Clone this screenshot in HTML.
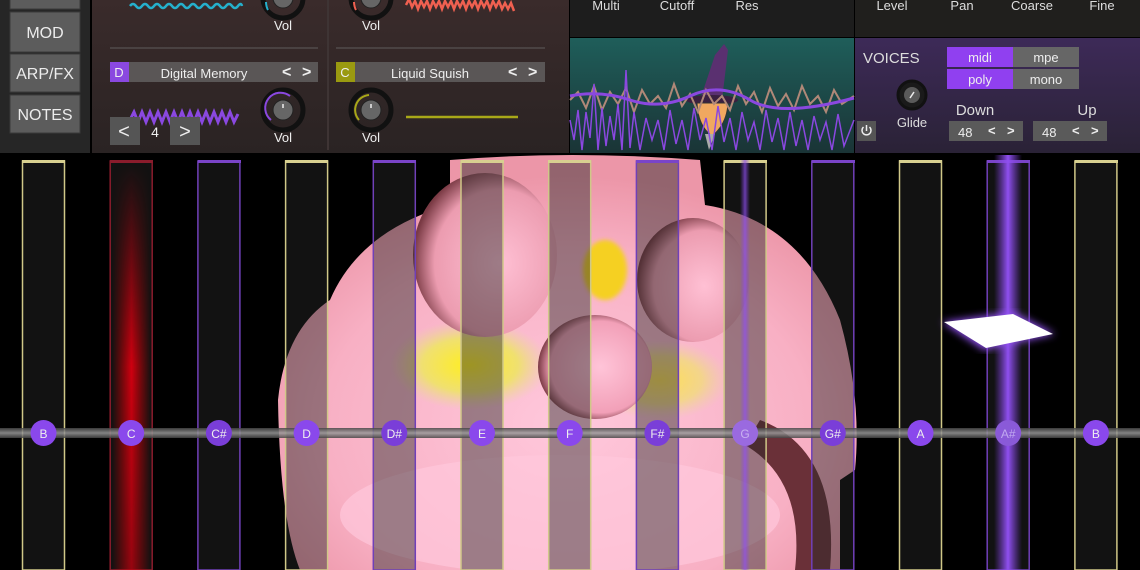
<!DOCTYPE html>
<html><head><meta charset="utf-8"><style>
html,body{margin:0;padding:0;background:#000;width:1140px;height:570px;overflow:hidden}
svg{display:block}
text{font-family:"Liberation Sans",sans-serif}
</style></head><body>
<svg width="1140" height="570" viewBox="0 0 1140 570" xmlns="http://www.w3.org/2000/svg">
<defs>
<linearGradient id="mainbg" x1="0" y1="0" x2="0" y2="1"><stop offset="0" stop-color="#3a2b2b"/><stop offset="1" stop-color="#2a2323"/></linearGradient>
<linearGradient id="scope" x1="0" y1="0" x2="0" y2="1"><stop offset="0" stop-color="#1f5e5a"/><stop offset="1" stop-color="#1a3436"/></linearGradient>
<linearGradient id="voice" x1="0" y1="0" x2="0" y2="1"><stop offset="0" stop-color="#3d2a58"/><stop offset="1" stop-color="#2a2236"/></linearGradient>
<linearGradient id="cred" x1="0" y1="0" x2="1" y2="0"><stop offset="0" stop-color="#c00" stop-opacity="0"/><stop offset="0.5" stop-color="#d00010"/><stop offset="1" stop-color="#c00" stop-opacity="0"/></linearGradient>
<linearGradient id="credv" x1="0" y1="0" x2="0" y2="1"><stop offset="0" stop-color="#fff" stop-opacity="0"/><stop offset="0.5" stop-color="#fff"/><stop offset="1" stop-color="#fff" stop-opacity="0.7"/></linearGradient>
<mask id="cm"><rect x="110" y="163" width="43" height="407" fill="url(#credv)"/></mask>
<linearGradient id="pbeam" x1="0" y1="0" x2="1" y2="0"><stop offset="0" stop-color="#8040e0" stop-opacity="0"/><stop offset="0.5" stop-color="#9050f0"/><stop offset="1" stop-color="#8040e0" stop-opacity="0"/></linearGradient>
<linearGradient id="gline" x1="0" y1="0" x2="0" y2="1"><stop offset="0" stop-color="#444"/><stop offset="0.5" stop-color="#9a9a9a"/><stop offset="1" stop-color="#444"/></linearGradient>
<radialGradient id="pink" cx="0.5" cy="0.65" r="0.6"><stop offset="0" stop-color="#ffc8dc"/><stop offset="0.7" stop-color="#f8b0c4"/><stop offset="1" stop-color="#ec96a8"/></radialGradient>
<radialGradient id="lobe" cx="0.6" cy="0.55" r="0.6"><stop offset="0" stop-color="#ffc0d4"/><stop offset="0.75" stop-color="#ec9cb0"/><stop offset="1" stop-color="#7a3a44"/></radialGradient>
<radialGradient id="ball" cx="0.55" cy="0.5" r="0.55"><stop offset="0" stop-color="#ffc4d8"/><stop offset="0.8" stop-color="#f2a0b8"/><stop offset="1" stop-color="#7a3a44"/></radialGradient>
<radialGradient id="yel" cx="0.5" cy="0.5" r="0.5"><stop offset="0" stop-color="#ffee20"/><stop offset="0.6" stop-color="#f0e070"/><stop offset="1" stop-color="#e8d8a0" stop-opacity="0"/></radialGradient>
<filter id="blur"><feGaussianBlur stdDeviation="4"/></filter>
<filter id="sblur"><feGaussianBlur stdDeviation="2"/></filter>
</defs>

<!-- ===== top panels ===== -->
<rect x="0" y="0" width="90" height="153" fill="#262626"/>
<rect x="10" y="-10" width="70" height="19" fill="#5c5c5c" stroke="#3a3a3a"/>
<rect x="10" y="12" width="70" height="40" fill="#5c5c5c" stroke="#3a3a3a"/>
<rect x="10" y="54" width="70" height="38" fill="#5c5c5c" stroke="#3a3a3a"/>
<rect x="10" y="95" width="70" height="38" fill="#5c5c5c" stroke="#3a3a3a"/>
<g fill="#ececec" font-size="16" text-anchor="middle">
<text x="45" y="38">MOD</text><text x="45" y="79">ARP/FX</text><text x="45" y="120">NOTES</text></g>

<rect x="92" y="0" width="477" height="153" fill="url(#mainbg)"/>
<line x1="328" y1="0" x2="328" y2="150" stroke="#3e3434" stroke-width="2"/>
<line x1="110" y1="48" x2="318" y2="48" stroke="#4a4242" stroke-width="2"/>
<line x1="336" y1="48" x2="545" y2="48" stroke="#4a4242" stroke-width="2"/>

<!-- waves -->
<path d="M130,6 q3,-4 6,0 t6,0 t6,0 t6,0 t6,0 t6,0 t6,0 t6,0 t6,0 t6,0 t6,0 t6,0 t6,0 t6,0 t6,0 t6,0 t6,0 t6,0 t4,0" fill="none" stroke="#25b0cc" stroke-width="2.5"/>
<path d="M406,5 l3,-6 3,8 3,-6 3,8 3,-8 3,6 3,-6 3,8 3,-8 3,6 3,-6 3,8 3,-8 3,6 3,-6 3,8 3,-8 3,6 3,-6 3,8 3,-8 3,6 3,-6 3,8 3,-8 3,6 3,-6 3,8 3,-8 3,6 3,-6 3,8 3,-6 3,6 3,-6 3,8" fill="none" stroke="#f06050" stroke-width="2.5"/>
<path d="M130,120 l4,-8 4,10 4,-10 4,10 4,-10 4,10 4,-10 4,10 4,-10 4,10 4,-10 4,10 4,-10 4,10 4,-10 4,10 4,-10 4,10 4,-10 4,10 4,-10 4,10 4,-10 4,10 4,-10 4,10 4,-8" fill="none" stroke="#8a48e0" stroke-width="3"/>
<line x1="406" y1="117" x2="518" y2="117" stroke="#a8a818" stroke-width="2.5"/>

<!-- knobs -->
<g>
<circle cx="283" cy="-2" r="20" fill="none" stroke="#111" stroke-width="5"/><circle cx="283" cy="-2" r="10" fill="#666" stroke="#222"/>
<path d="M268,10 A18,18 0 0 1 266,2" stroke="#25b0cc" stroke-width="2" fill="none"/>
<circle cx="371" cy="-2" r="20" fill="none" stroke="#111" stroke-width="5"/><circle cx="371" cy="-2" r="10" fill="#666" stroke="#222"/>
<path d="M356,10 A18,18 0 0 1 354,2" stroke="#f06050" stroke-width="2" fill="none"/>
<circle cx="283" cy="110" r="20" fill="none" stroke="#111" stroke-width="5"/><circle cx="283" cy="110" r="10" fill="#666" stroke="#222"/>
<line x1="283" y1="104" x2="283" y2="108" stroke="#eee" stroke-width="1.5"/>
<path d="M271,120 A15,15 0 0 1 290,96" stroke="#8a48e0" stroke-width="2" fill="none"/>
<circle cx="371" cy="110" r="20" fill="none" stroke="#111" stroke-width="5"/><circle cx="371" cy="110" r="10" fill="#666" stroke="#222"/>
<line x1="371" y1="104" x2="371" y2="108" stroke="#eee" stroke-width="1.5"/>
<path d="M359,120 A15,15 0 0 1 369,95" stroke="#a8a818" stroke-width="2" fill="none"/>
</g>
<g fill="#eee" font-size="13" text-anchor="middle">
<text x="283" y="30">Vol</text><text x="371" y="30">Vol</text>
<text x="283" y="142">Vol</text><text x="371" y="142">Vol</text></g>

<!-- osc headers -->
<rect x="110" y="62" width="208" height="20" fill="#5a5656"/>
<rect x="110" y="62" width="19" height="20" fill="#8a48e0"/>
<rect x="336" y="62" width="209" height="20" fill="#5a5656"/>
<rect x="336" y="62" width="19" height="20" fill="#9a9a10"/>
<g fill="#eee" font-size="13">
<text x="119" y="77" text-anchor="middle">D</text>
<text x="204" y="78" text-anchor="middle">Digital Memory</text>
<text x="345" y="77" text-anchor="middle">C</text>
<text x="430" y="78" text-anchor="middle">Liquid Squish</text>
<text x="282" y="77" font-size="16" font-weight="bold">&lt;</text><text x="302" y="77" font-size="16" font-weight="bold">&gt;</text>
<text x="508" y="77" font-size="16" font-weight="bold">&lt;</text><text x="528" y="77" font-size="16" font-weight="bold">&gt;</text>
</g>
<rect x="110" y="117" width="30" height="28" fill="#555"/>
<rect x="170" y="117" width="30" height="28" fill="#555"/>
<g fill="#eee" text-anchor="middle"><text x="124" y="138" font-size="20">&lt;</text><text x="155" y="137" font-size="14">4</text><text x="185" y="138" font-size="20">&gt;</text></g>

<!-- filter area -->
<rect x="570" y="0" width="285" height="37" fill="#1d1d1d"/>
<rect x="855" y="0" width="285" height="37" fill="#201f1d"/>
<rect x="854" y="0" width="1" height="153" fill="#000"/>
<g fill="#ddd" font-size="13" text-anchor="middle">
<text x="606" y="10">Multi</text><text x="677" y="10">Cutoff</text><text x="747" y="10">Res</text>
<text x="892" y="10">Level</text><text x="962" y="10">Pan</text><text x="1032" y="10">Coarse</text><text x="1102" y="10">Fine</text></g>

<rect x="570" y="38" width="284" height="115" fill="url(#scope)"/>
<!-- wizard -->
<path d="M700,100 L715,55 L724,44 L728,50 L722,100 Z" fill="#5a3070"/>
<ellipse cx="712" cy="100" rx="26" ry="5" fill="#3a2040"/>
<path d="M697,103 Q698,126 712,136 Q727,124 728,103 Z" fill="#f0a860" stroke="#333"/>
<path d="M705,134 L709,150 L715,134 Z" fill="#aaa"/>
<!-- scope waves -->
<path d="M570,100 L578,92 586,108 594,86 602,110 610,92 618,104 626,88 634,112 642,90 650,104 658,96 666,108 674,84 682,106 690,94 698,112 706,90 714,104 722,96 730,110 738,86 746,104 754,92 762,112 770,88 778,106 786,94 794,110 802,86 810,104 818,96 826,112 834,90 842,104 854,96" fill="none" stroke="#b08878" stroke-width="2"/>
<path d="M570,96 Q600,90 630,100 T690,96 T750,100 T854,98" fill="none" stroke="#8a48e0" stroke-width="3"/>
<path d="M570,120 L574,140 578,110 582,150 586,112 590,138 594,84 598,150 602,108 606,146 610,116 614,140 618,104 622,150 626,70 630,148 634,112 640,150 646,118 652,140 658,120 664,150 670,110 676,144 682,120 688,150 694,108 700,140 706,118 712,150 718,106 724,142 730,118 736,150 742,112 748,140 754,122 760,150 766,110 772,142 778,118 784,150 790,112 796,146 802,120 808,150 814,116 820,140 826,122 832,150 838,114 844,146 854,120" fill="none" stroke="#8a48e0" stroke-width="1.5"/>

<!-- voices -->
<rect x="855" y="38" width="285" height="115" fill="url(#voice)"/>
<text x="863" y="63" fill="#ddd" font-size="15">VOICES</text>
<rect x="947" y="47" width="66" height="20" fill="#9040f0"/><rect x="1013" y="47" width="66" height="20" fill="#666"/>
<rect x="947" y="69" width="66" height="20" fill="#9040f0"/><rect x="1013" y="69" width="66" height="20" fill="#666"/>
<g fill="#eee" font-size="13" text-anchor="middle">
<text x="980" y="62">midi</text><text x="1046" y="62">mpe</text>
<text x="980" y="84">poly</text><text x="1046" y="84">mono</text></g>
<circle cx="912" cy="95" r="14" fill="#1a1a1a" stroke="#111" stroke-width="3"/>
<circle cx="912" cy="95" r="8" fill="#5a5a5a"/>
<line x1="910" y1="98" x2="914" y2="92" stroke="#eee" stroke-width="1.5"/>
<text x="912" y="127" fill="#ddd" font-size="13" text-anchor="middle">Glide</text>
<rect x="857" y="121" width="19" height="20" fill="#555"/>
<path d="M863.5,127 A4.5,4.5 0 1 0 869.5,127 M866.5,125 L866.5,131" stroke="#eee" stroke-width="1.5" fill="none"/>
<text x="975" y="115" fill="#ddd" font-size="15" text-anchor="middle">Down</text>
<text x="1087" y="115" fill="#ddd" font-size="15" text-anchor="middle">Up</text>
<rect x="949" y="121" width="74" height="20" fill="#5a5a5a"/><rect x="1033" y="121" width="74" height="20" fill="#5a5a5a"/>
<g fill="#eee" font-size="13"><text x="958" y="137">48</text><text x="988" y="135" font-weight="bold">&lt;</text><text x="1007" y="135" font-weight="bold">&gt;</text>
<text x="1042" y="137">48</text><text x="1072" y="135" font-weight="bold">&lt;</text><text x="1091" y="135" font-weight="bold">&gt;</text></g>

<!-- ===== blob ===== -->
<g>
<path d="M278,400 Q285,330 330,300 Q360,230 450,205 L450,160 Q570,150 700,160 L705,205 Q800,220 840,320 Q862,400 855,470 L840,480 L840,570 L300,570 Q280,520 278,400 Z" fill="url(#pink)"/>
<ellipse cx="470" cy="365" rx="80" ry="45" fill="url(#yel)"/>
<ellipse cx="660" cy="380" rx="70" ry="40" fill="url(#yel)" opacity="0.7"/>
<ellipse cx="605" cy="270" rx="22" ry="30" fill="#f5d020" filter="url(#sblur)"/>
<ellipse cx="485" cy="255" rx="72" ry="82" fill="url(#lobe)"/>
<ellipse cx="693" cy="280" rx="56" ry="62" fill="url(#lobe)"/>
<path d="M760,420 Q840,450 830,570 L795,570 Q805,480 745,445 Z" fill="#6a3038"/>
<ellipse cx="595" cy="367" rx="57" ry="52" fill="url(#ball)"/>
<ellipse cx="560" cy="515" rx="220" ry="60" fill="#ffc8dc" opacity="0.7"/>
</g>

<!-- ===== keys ===== -->
<g>
<g fill="rgba(40,40,40,0.45)" stroke-width="1.5">
<rect x="22.5" y="161" width="42" height="409" stroke="#d0c888" fill="#121212"/>
<rect x="110.2" y="161" width="42" height="409" stroke="#8a1c2c" fill="#121212"/>
<rect x="197.9" y="161" width="42" height="409" stroke="#7040b8" fill="#121212"/>
<rect x="285.6" y="161" width="42" height="409" stroke="#d0c888"/>
<rect x="373.3" y="161" width="42" height="409" stroke="#7040b8"/>
<rect x="461" y="161" width="42" height="409" stroke="#d0c888"/>
<rect x="548.7" y="161" width="42" height="409" stroke="#d0c888"/>
<rect x="636.4" y="161" width="42" height="409" stroke="#7040b8"/>
<rect x="724.1" y="161" width="42" height="409" stroke="#d0c888"/>
<rect x="811.8" y="161" width="42" height="409" stroke="#7040b8"/>
<rect x="899.5" y="161" width="42" height="409" stroke="#d0c888" fill="#121212"/>
<rect x="987.2" y="161" width="42" height="409" stroke="#7040b8" fill="#121212"/>
<rect x="1074.9" y="161" width="42" height="409" stroke="#d0c888" fill="#121212"/>
</g>
<g>
<rect x="22" y="160" width="43" height="3" fill="#d8d090"/>
<rect x="110" y="160" width="43" height="3" fill="#8a1c2c"/>
<rect x="198" y="160" width="43" height="3" fill="#7a44c8"/>
<rect x="285" y="160" width="43" height="3" fill="#d8d090"/>
<rect x="373" y="160" width="43" height="3" fill="#7a44c8"/>
<rect x="461" y="160" width="43" height="3" fill="#d8d090"/>
<rect x="548" y="160" width="43" height="3" fill="#d8d090"/>
<rect x="636" y="160" width="43" height="3" fill="#7a44c8"/>
<rect x="724" y="160" width="43" height="3" fill="#d8d090"/>
<rect x="812" y="160" width="43" height="3" fill="#7a44c8"/>
<rect x="899" y="160" width="43" height="3" fill="#d8d090"/>
<rect x="987" y="160" width="43" height="3" fill="#7a44c8"/>
<rect x="1075" y="160" width="43" height="3" fill="#d8d090"/>
</g>
<rect x="112" y="163" width="39" height="407" fill="url(#cred)" mask="url(#cm)"/>
<rect x="740" y="160" width="10" height="410" fill="url(#pbeam)" opacity="0.7"/>
<rect x="994" y="155" width="28" height="415" fill="url(#pbeam)"/>
<path d="M942,322 L1013,312 L1055,334 L984,350 Z" fill="#9050f0" filter="url(#blur)"/>
<path d="M944,322 L1013,314 L1053,334 L986,348 Z" fill="#fff"/>

<rect x="0" y="428" width="1140" height="10" fill="url(#gline)" opacity="0.85"/>
<g fill="#8a48ec">
<circle cx="43.5" cy="433" r="13"/><circle cx="131.2" cy="433" r="13"/><circle cx="218.9" cy="433" r="13" fill="#7a3ed8"/>
<circle cx="306.6" cy="433" r="13"/><circle cx="394.3" cy="433" r="13" fill="#7a3ed8"/><circle cx="482" cy="433" r="13"/>
<circle cx="569.7" cy="433" r="13"/><circle cx="657.4" cy="433" r="13" fill="#7a3ed8"/><circle cx="745.1" cy="433" r="13" fill="#9a6ae0"/>
<circle cx="832.8" cy="433" r="13" fill="#7a3ed8"/><circle cx="920.5" cy="433" r="13"/><circle cx="1008.2" cy="433" r="13" fill="#8a5ad8"/>
<circle cx="1095.9" cy="433" r="13"/></g>
<g fill="#eee" font-size="12" text-anchor="middle">
<text x="43.5" y="438">B</text><text x="131.2" y="438">C</text><text x="218.9" y="438">C#</text>
<text x="306.6" y="438">D</text><text x="394.3" y="438">D#</text><text x="482" y="438">E</text>
<text x="569.7" y="438">F</text><text x="657.4" y="438">F#</text><text x="745.1" y="438" fill="#c8b0f0">G</text>
<text x="832.8" y="438">G#</text><text x="920.5" y="438">A</text><text x="1008.2" y="438" fill="#c0a8f0">A#</text>
<text x="1095.9" y="438">B</text></g>
</g>
</svg>
</body></html>
